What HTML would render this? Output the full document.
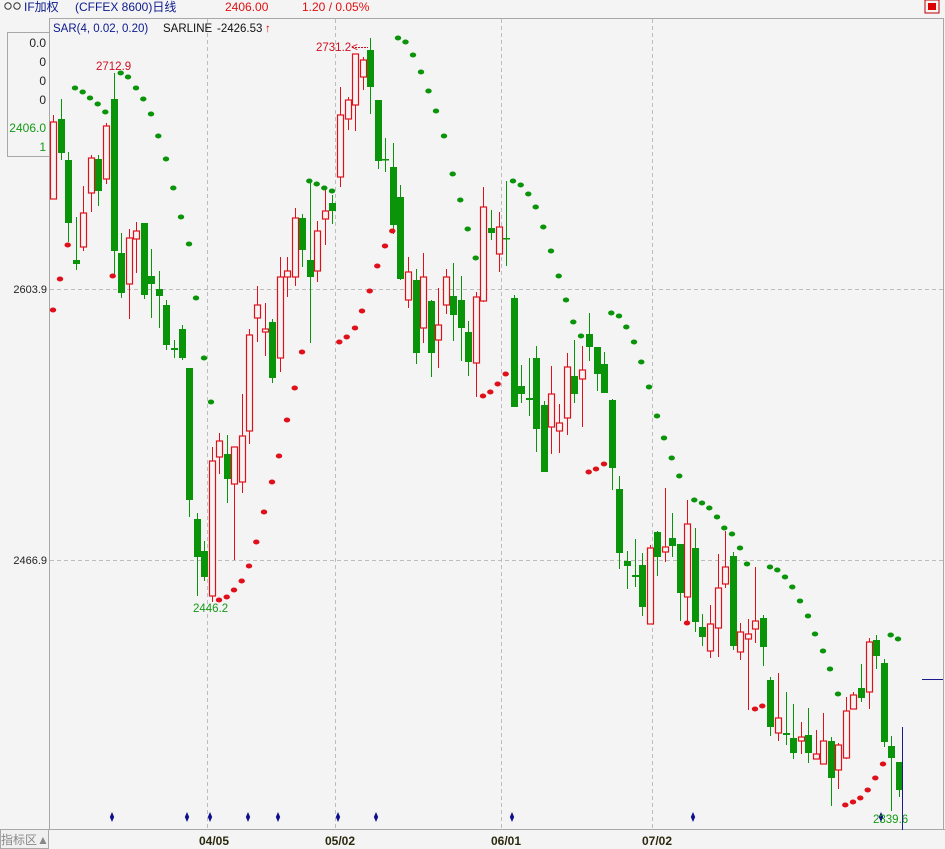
<!DOCTYPE html>
<html><head><meta charset="utf-8">
<style>
html,body{margin:0;padding:0;background:#f4f4f4;}
body{width:945px;height:849px;overflow:hidden;position:relative;font-family:"Liberation Sans","WenQuanYi Zen Hei",sans-serif;}
svg{position:absolute;left:0;top:0;}
</style></head><body>
<svg id="c" width="945" height="849" xmlns="http://www.w3.org/2000/svg" font-family="Liberation Sans, WenQuanYi Zen Hei, sans-serif">
<rect x="0" y="0" width="945" height="849" fill="#f4f4f4"/>
<!-- header -->
<g fill="none" stroke="#333" stroke-width="1">
<circle cx="8" cy="6" r="3.2"/><circle cx="17" cy="6" r="3.2"/>
</g>
<text x="24" y="11" font-size="12" fill="#0c1a8c">IF加权</text>
<text x="75" y="11" font-size="12" fill="#0c1a8c">(CFFEX 8600)日线</text>
<text x="225" y="11" font-size="12" fill="#e01010">2406.00</text>
<text x="302" y="11" font-size="12" fill="#e01010">1.20 / 0.05%</text>
<rect x="925" y="0" width="14" height="13" fill="#f4f4f4" stroke="#b00" stroke-width="1"/>
<rect x="928" y="3" width="8" height="7" fill="#d00"/>
<!-- frame -->
<line x1="49.5" y1="18.5" x2="943" y2="18.5" stroke="#a8a8a8"/>
<line x1="49.5" y1="18" x2="49.5" y2="829" stroke="#a8a8a8"/>
<line x1="943.5" y1="18" x2="943.5" y2="829" stroke="#a8a8a8"/>
<line x1="0" y1="829.5" x2="945" y2="829.5" stroke="#a8a8a8"/>
<!-- grid -->
<g stroke="#bdbdbd" stroke-dasharray="4,3" stroke-width="1">
<line x1="50" y1="289.5" x2="943" y2="289.5"/>
<line x1="50" y1="560.5" x2="943" y2="560.5"/>
<line x1="207.5" y1="19" x2="207.5" y2="829"/>
<line x1="335.5" y1="19" x2="335.5" y2="829"/>
<line x1="501.5" y1="19" x2="501.5" y2="829"/>
<line x1="652.5" y1="19" x2="652.5" y2="829"/>
</g>
<text x="47" y="293" font-size="11" fill="#222" text-anchor="end">2603.9</text>
<text x="47" y="564" font-size="11" fill="#222" text-anchor="end">2466.9</text>
<!-- left box -->
<rect x="7.5" y="32.5" width="42" height="124" fill="#f4f4f4" stroke="#a8a8a8"/>
<g font-size="12" text-anchor="end">
<text x="46" y="47" fill="#222">0.0</text>
<text x="46" y="66" fill="#222">0</text>
<text x="46" y="85" fill="#222">0</text>
<text x="46" y="104" fill="#222">0</text>
<text x="46" y="132" fill="#159a15">2406.0</text>
<text x="46" y="151" fill="#159a15">1</text>
</g>
<text x="53" y="32" font-size="11.5" fill="#0c1a8c">SAR(4, 0.02, 0.20)</text>
<text x="163" y="32" font-size="11.5" fill="#111">SARLINE</text>
<text x="217" y="32" font-size="11.5" fill="#111">-2426.53</text>
<text x="265" y="32" font-size="11.5" fill="#e01010">↑</text>
<g id="cand"></g>
<text x="96" y="70" font-size="11.5" fill="#d01020">2712.9</text>
<text x="316" y="51" font-size="11.5" fill="#d01020">2731.2&lt;</text>
<line x1="352" y1="47.5" x2="368" y2="47.5" stroke="#d01020" stroke-dasharray="2,1"/>
<text x="193" y="612" font-size="11.5" fill="#159a15">2446.2</text>
<text x="873" y="823" font-size="11.5" fill="#159a15">2339.6</text>
<!-- bottom -->
<rect x="0.5" y="829.5" width="48" height="19" fill="#f0f0f0" stroke="#a8a8a8"/>
<text x="1" y="844" font-size="12" fill="#888">指标区▲</text>
<g font-size="12" fill="#2a2a10" font-weight="bold">
<text x="199" y="845">04/05</text>
<text x="325" y="845">05/02</text>
<text x="491" y="845">06/01</text>
<text x="642" y="845">07/02</text>
</g>
<line x1="902.5" y1="727" x2="902.5" y2="830" stroke="#1a1a8c"/>
<line x1="922" y1="679.5" x2="943" y2="679.5" stroke="#1a1a8c"/>
</svg>
<script>
var D=`0 u 122 199 115 199
1 d 119 153 99 160
2 d 160 223 152 242
3 d 260 264 217 270
4 u 213 247 186 251
5 u 158 193 155 212
6 d 159 191 155 206
7 u 126 179 123 184
8 d 99 251 73 277
9 d 253 293 233 298
10 u 238 284 229 319
11 u 231 239 222 273
12 d 223 295 223 299
13 d 276 284 249 318
14 d 289 296 271 328
15 d 305 345 300 350
16 d 348 350 340 358
17 d 329 358 325 360
18 d 368 500 368 517
19 d 519 557 513 596
20 d 551 577 541 581
21 u 461 596 447 602
22 u 441 457 433 474
23 d 454 479 435 503
24 u 447 484 447 560
25 u 436 482 394 493
26 u 335 431 329 444
27 u 305 318 286 342
28 u 329 332 303 356
29 d 322 378 319 383
30 u 277 358 257 372
31 u 271 277 257 297
32 u 218 277 208 286
33 d 218 250 214 267
34 d 260 277 180 343
35 u 231 271 221 282
36 u 211 219 189 245
37 d 203 211 195 224
38 u 115 177 87 187
39 u 100 119 97 130
40 u 54 105 54 131
41 u 60 77 57 90
42 d 50 87 38 114
43 d 100 161 100 169
44 d 159 160 138 172
45 d 167 225 143 234
46 d 197 279 185 280
47 u 272 300 257 308
48 d 280 353 269 364
49 u 277 328 253 343
50 d 301 353 300 377
51 u 325 340 288 368
52 u 277 305 269 314
53 d 296 315 263 341
54 d 300 328 276 361
55 d 332 362 321 376
56 u 297 363 292 397
57 u 207 301 187 302
58 d 228 233 210 240
59 u 227 254 212 272
60 d 238 239 181 266
61 d 298 407 295 407
62 d 386 394 365 403
63 d 398 400 358 416
64 d 358 429 346 452
65 d 405 472 401 472
66 u 394 427 366 454
67 u 423 431 404 453
68 u 367 418 353 435
69 d 376 394 340 403
70 u 370 379 346 427
71 d 334 347 313 361
72 d 347 374 347 391
73 d 364 393 352 393
74 d 400 468 399 490
75 d 489 553 476 569
76 d 561 566 551 589
77 d 575 577 539 587
78 d 565 607 553 616
79 u 548 624 545 624
80 d 532 557 531 576
81 u 547 552 488 562
82 d 538 546 513 557
83 d 544 593 544 621
84 u 524 597 500 623
85 d 548 622 528 632
86 d 627 637 614 646
87 u 624 651 605 658
88 u 588 628 554 657
89 u 567 584 531 588
90 d 556 646 552 650
91 u 632 652 623 660
92 u 634 639 619 710
93 u 621 629 567 643
94 d 618 647 615 666
95 d 680 727 677 736
96 u 718 733 673 741
97 d 733 735 692 745
98 d 738 753 704 759
99 u 737 741 722 754
100 d 735 753 708 763
101 u 754 759 730 759
102 u 741 764 713 764
103 d 741 778 737 806
104 u 745 770 743 789
105 u 711 758 697 759
106 u 695 709 692 709
107 d 688 698 664 702
108 u 642 692 638 709
109 d 640 656 635 669
110 d 663 742 659 747
111 d 746 758 736 811
112 d 762 790 762 797`;
var G="#0a940a",R="#e0101a",s="";
D.split("\n").forEach(function(l){var p=l.trim().split(/\s+/);var i=+p[0],t=p[1],bt=+p[2],bb=+p[3],wt=+p[4],wb=+p[5];
var x=Math.round(53.15+i*7.55)+0.5;var h=Math.max(bb-bt,1.5);
if(t=="d"){s+='<line x1="'+x+'" y1="'+wt+'" x2="'+x+'" y2="'+wb+'" stroke="'+G+'"/>';
s+='<rect x="'+(x-3.5)+'" y="'+bt+'" width="7" height="'+h+'" fill="'+G+'"/>';}
else{s+='<line x1="'+x+'" y1="'+wt+'" x2="'+x+'" y2="'+wb+'" stroke="'+R+'"/>';
s+='<rect x="'+(x-3)+'" y="'+bt+'" width="6" height="'+h+'" fill="#f4f4f4" stroke="'+R+'" stroke-width="1.2"/>';}
});
var gd=[[75,88],[82.7,92],[90,98],[97.7,104],[105.3,112],[120.7,73],[128,77],[136,88],[143.3,99],[151,114],[158.3,136],[166,159],[173.3,188],[181,217],[189,244],[196,298],[204,358],[211,402],[309.3,181],[316.7,184],[324.3,188],[332,191],[398,38],[405.5,42],[413,55],[421,72],[428.5,91],[436,111],[444,136],[452.7,174],[460.3,200],[467.7,229],[475.7,258],[513,181],[520.7,185],[528.3,194],[535.7,207],[543.3,227],[551,251],[558.7,276],[566,300],[573.3,322],[581,336],[611.3,313],[619,316],[626.3,327],[634,342],[641.3,362],[649,387],[657,416],[664,438],[671.7,458],[679.3,476],[694.3,500],[702,503],[709.3,508],[717,517],[724.3,528],[732,534],[740,548],[747,564],[770,567],[777.3,570],[785,577],[792.3,587],[800,601],[808,616],[815,634],[823,651],[830,669],[838,694],[890.7,635],[898,639]];
var rd=[[53,310],[60,279],[67.7,245],[112.7,276],[219,600],[226.7,597],[234,590],[241.7,581],[249,566],[256.3,542],[264,512],[272,482],[279,456],[287,420],[294.7,388],[302,352],[339.3,342],[346.7,337],[355,328],[362,311],[369.7,291],[377.3,266],[385,246],[392.3,231],[483,396],[490.3,392],[497.7,384],[505.7,374],[588.7,472],[596,469],[604,464],[687,623],[755,709],[762.3,706],[845.3,805],[853,802],[860.3,798],[867.7,790],[875.3,778],[883,764]];
gd.forEach(function(d){s+='<ellipse cx="'+d[0]+'" cy="'+d[1]+'" rx="3.2" ry="2.5" fill="'+G+'"/>';});
rd.forEach(function(d){s+='<ellipse cx="'+d[0]+'" cy="'+d[1]+'" rx="3.2" ry="2.5" fill="'+R+'"/>';});
[112,187,210,248,278,338,376,512,693,881].forEach(function(x){s+='<polygon points="'+x+',812 '+(x+2.2)+',817 '+x+',822 '+(x-2.2)+',817" fill="#10108c"/>';});
document.getElementById("cand").innerHTML=s;
</script>
</body></html>
